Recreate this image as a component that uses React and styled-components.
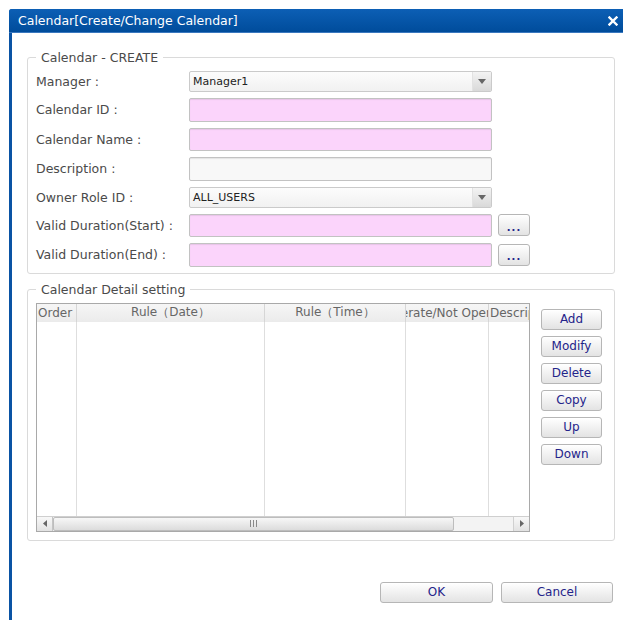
import React from "react";
import styled, { createGlobalStyle } from "styled-components";

const GlobalStyle = createGlobalStyle`
  html, body {
    margin: 0;
    background: #fff;
  }
  * {
    box-sizing: border-box;
  }
`;

const FONT = `"DejaVu Sans", Verdana, sans-serif`;

const fields = [
  { label: "Manager :", kind: "select", value: "Manager1" },
  { label: "Calendar ID :", kind: "input", required: true },
  { label: "Calendar Name :", kind: "input", required: true },
  { label: "Description :", kind: "input" },
  { label: "Owner Role ID :", kind: "select", value: "ALL_USERS" },
  { label: "Valid Duration(Start) :", kind: "input", required: true, picker: true },
  { label: "Valid Duration(End) :", kind: "input", required: true, picker: true },
];

const columns = [
  { title: "Order", width: 40, align: "flex-start" },
  { title: "Rule（Date）", width: 188, align: "center" },
  { title: "Rule（Time）", width: 141, align: "center" },
  { title: "Operate/Not Operate", width: 83, align: "center" },
  { title: "Description", width: 120, align: "flex-start" },
];

const actions = ["Add", "Modify", "Delete", "Copy", "Up", "Down"];

const App = () => {
  return (
    <>
      <GlobalStyle />
      <Window>
        <TitleBar>
          <span>Calendar[Create/Change Calendar]</span>
          <CloseButton aria-label="close">
            <svg width="10" height="10" viewBox="0 0 10 10">
              <path d="M1.5 1.5 L8.5 8.5 M8.5 1.5 L1.5 8.5" stroke="#fff" strokeWidth="2.4" strokeLinecap="square" />
            </svg>
          </CloseButton>
        </TitleBar>
        <Body>
          <Group>
            <Legend>Calendar - CREATE</Legend>
            <FormGrid>
              {fields.map((f) => (
                <React.Fragment key={f.label}>
                  <Label>{f.label}</Label>
                  {f.kind === "select" ? (
                    <Select>
                      <SelectText>{f.value}</SelectText>
                      <SelectArrow>
                        <svg width="8" height="5" viewBox="0 0 8 5">
                          <path d="M0 0 H8 L4 5 Z" fill="#666" />
                        </svg>
                      </SelectArrow>
                    </Select>
                  ) : (
                    <TextField readOnly $required={f.required} />
                  )}
                  {f.picker ? <PickerButton>...</PickerButton> : <span />}
                </React.Fragment>
              ))}
            </FormGrid>
          </Group>

          <Group $spaced>
            <Legend>Calendar Detail setting</Legend>
            <DetailRow>
              <Grid>
                <GridHead>
                  {columns.map((c) => (
                    <HeadCell key={c.title} $width={c.width} $align={c.align}>
                      <span>{c.title}</span>
                    </HeadCell>
                  ))}
                </GridHead>
                <GridBody>
                  {columns.map((c) => (
                    <BodyCol key={c.title} $width={c.width} />
                  ))}
                </GridBody>
                <ScrollBar>
                  <ScrollArrow>
                    <svg width="4" height="7" viewBox="0 0 4 7">
                      <path d="M4 0 V7 L0 3.5 Z" fill="#666" />
                    </svg>
                  </ScrollArrow>
                  <Thumb>
                    <Grip />
                    <Grip />
                    <Grip />
                  </Thumb>
                  <Track />
                  <ScrollArrow $right>
                    <svg width="4" height="7" viewBox="0 0 4 7">
                      <path d="M0 0 V7 L4 3.5 Z" fill="#666" />
                    </svg>
                  </ScrollArrow>
                </ScrollBar>
              </Grid>
              <ActionList>
                {actions.map((a) => (
                  <ActionButton key={a}>{a}</ActionButton>
                ))}
              </ActionList>
            </DetailRow>
          </Group>

          <Footer>
            <DialogButton>OK</DialogButton>
            <DialogButton $width={112}>Cancel</DialogButton>
          </Footer>
        </Body>
      </Window>
    </>
  );
};

const Window = styled.div`
  margin: 9px 0 0 9px;
  width: 614px;
  height: 611px;
  background: #fff;
  border-left: 3px solid #0a53a4;
  border-top-left-radius: 3px;
  display: flex;
  flex-direction: column;
  font-family: ${FONT};
`;

const TitleBar = styled.div`
  height: 24px;
  margin-left: -3px;
  padding: 0 4px 0 9px;
  display: flex;
  align-items: center;
  justify-content: space-between;
  background: linear-gradient(#0c5fb5, #004c9b);
  border-top-left-radius: 3px;
  color: #fff;
  font-size: 12.5px;
  border-bottom: 1px solid #3a78bf;
`;

const CloseButton = styled.div`
  width: 12px;
  height: 12px;
  display: flex;
  align-items: center;
  justify-content: center;
`;

const Body = styled.div`
  padding: 17px 8px 0 15px;
  display: flex;
  flex-direction: column;
`;

const Group = styled.fieldset`
  margin: ${(p) => (p.$spaced ? "8px" : "0")} 0 0;
  padding: 6px 8px ${(p) => (p.$spaced ? "8px" : "6px")};
  border: 1px solid #dadada;
  border-radius: 3px;
  min-width: 0;
`;

const Legend = styled.legend`
  padding: 0 5px;
  font-size: 12.5px;
  line-height: 15px;
  color: #4a4a4a;
`;

const FormGrid = styled.div`
  display: grid;
  grid-template-columns: 147px 303px 32px;
  column-gap: 6px;
  row-gap: 6px;
  align-items: center;
`;

const Label = styled.div`
  font-size: 12.5px;
  color: #4a4a4a;
  white-space: nowrap;
`;

const TextField = styled.input`
  width: 303px;
  height: 23.5px;
  margin: 0;
  border: 1px solid #c2c2c2;
  border-radius: 2px;
  background: ${(p) => (p.$required ? "#fbd4fb" : "#f8f8f8")};
  box-shadow: inset 0 1px 1px rgba(0, 0, 0, 0.08);
  outline: none;
`;

const Select = styled.div`
  width: 303px;
  height: 21px;
  display: flex;
  align-items: stretch;
  border: 1px solid #cacaca;
  border-radius: 2px;
  background: linear-gradient(#fcfcfc, #f1f1f1);
  overflow: hidden;
`;

const SelectText = styled.div`
  flex: 1;
  display: flex;
  align-items: center;
  padding-left: 3px;
  font-size: 11px;
  color: #222;
`;

const SelectArrow = styled.div`
  width: 19px;
  display: flex;
  align-items: center;
  justify-content: center;
  background: linear-gradient(#f3f3f3, #d9d9d9);
  border-left: 1px solid #e2e2e2;
`;

const ButtonBase = styled.div`
  display: flex;
  align-items: center;
  justify-content: center;
  border: 1px solid #b6b6b6;
  border-radius: 3px;
  background: linear-gradient(#ffffff, #e3e3e3);
  box-shadow: inset 0 1px 0 #fff;
  color: #24248a;
  font-family: ${FONT};
  font-size: 12px;
  cursor: default;
`;

const PickerButton = styled(ButtonBase)`
  width: 32px;
  height: 22px;
  font-size: 10px;
  font-weight: bold;
  letter-spacing: 1px;
  padding-top: 4px;
`;

const DetailRow = styled.div`
  display: flex;
  gap: 11px;
`;

const Grid = styled.div`
  width: 494px;
  height: 229px;
  display: flex;
  flex-direction: column;
  border: 1px solid #a9a9a9;
  background: #fff;
  overflow: hidden;
`;

const GridHead = styled.div`
  height: 18px;
  display: flex;
  flex: none;
  background: linear-gradient(#f6f6f6, #ebebeb);
`;

const HeadCell = styled.div`
  width: ${(p) => p.$width}px;
  flex: none;
  display: flex;
  align-items: center;
  justify-content: ${(p) => p.$align};
  padding: 0 1px;
  border-right: 1px solid #d6d6d6;
  overflow: hidden;
  white-space: nowrap;
  font-size: 12px;
  color: #666;

  span {
    flex: none;
  }
`;

const GridBody = styled.div`
  flex: 1;
  display: flex;
`;

const BodyCol = styled.div`
  width: ${(p) => p.$width}px;
  flex: none;
  border-right: 1px solid #dedede;
`;

const ScrollBar = styled.div`
  height: 15px;
  flex: none;
  display: flex;
  border-top: 1px solid #cfcfcf;
  background: #f1f1f1;
`;

const ScrollArrow = styled.div`
  width: 16px;
  display: flex;
  align-items: center;
  justify-content: center;
  background: linear-gradient(#f8f8f8, #e2e2e2);
  border-left: ${(p) => (p.$right ? "1px solid #d0d0d0" : "none")};
  border-right: ${(p) => (p.$right ? "none" : "1px solid #c4c4c4")};
`;

const Thumb = styled.div`
  width: 401px;
  display: flex;
  align-items: center;
  justify-content: center;
  gap: 2px;
  background: linear-gradient(#f7f7f7, #dcdcdc);
  border: 1px solid #bdbdbd;
  border-radius: 2px;
`;

const Grip = styled.div`
  width: 1px;
  height: 7px;
  background: #8a8a8a;
`;

const Track = styled.div`
  flex: 1;
  background: #f3f3f3;
`;

const ActionList = styled.div`
  display: flex;
  flex-direction: column;
  gap: 6px;
  padding-top: 6px;
`;

const ActionButton = styled(ButtonBase)`
  width: 61px;
  height: 21px;
`;

const Footer = styled.div`
  margin-top: 41px;
  padding-right: 2px;
  display: flex;
  justify-content: flex-end;
  gap: 8px;
`;

const DialogButton = styled(ButtonBase)`
  width: ${(p) => p.$width || 113}px;
  height: 21px;
`;

export default App;
